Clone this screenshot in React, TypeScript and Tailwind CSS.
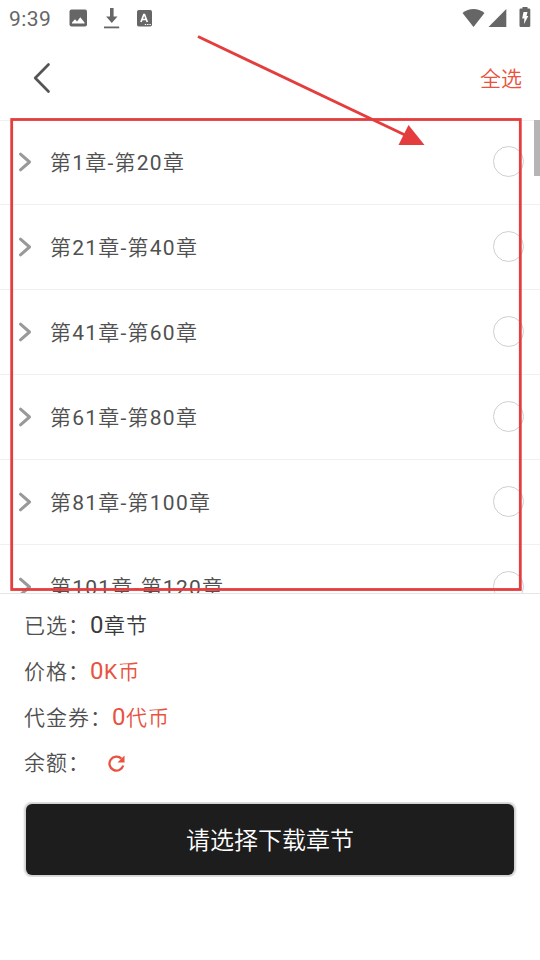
const chapters: [number, number][] = [
  [1, 20],
  [21, 40],
  [41, 60],
  [61, 80],
  [81, 100],
  [101, 120],
];

function StatusBar() {
  return (
    <div className="flex h-9 shrink-0 items-center justify-between px-[9px] text-[#666]">
      <div className="flex items-center">
        <span className="w-[60px] pt-px text-[21px] leading-9 tracking-[0.4px]">
          9:39
        </span>
        <svg width="18" height="18" viewBox="0 0 18 18">
          <rect width="17.5" height="17" x="0.5" y="0.5" rx="2" fill="currentColor" />
          <path d="M3 14.5v-1L6 10.3l2 2.2 3.3-4.2 4.2 5.2v1z" fill="#fff" />
        </svg>
        <svg width="16" height="21" viewBox="0 0 16 21" className="ml-[17px]">
          <path d="M6 0h3.6v8.5h3.9L7.8 15 2.1 8.5H6z" fill="currentColor" />
          <path d="M0 18.5h15.2v1.8H0z" fill="currentColor" />
        </svg>
        <svg width="15" height="17" viewBox="0 0 15 17" className="ml-[17px]">
          <rect width="15" height="16.5" rx="1.8" fill="currentColor" />
          <path d="M4 12 6.8 4.5h.7l2.8 7.5M5.1 9.5h4" stroke="#fff" strokeWidth="1.7" fill="none" />
          <path d="M7.8 14.5h6" stroke="#fff" strokeWidth="1.2" strokeDasharray="1.4 0.9" />
        </svg>
      </div>
      <div className="flex items-center">
        <svg width="23" height="19" viewBox="0 0 23 19">
          <path d="M0.5 4C7 -1.2 16 -1.2 22.5 4L11.5 18z" fill="currentColor" />
        </svg>
        <svg width="19" height="19" viewBox="0 0 19 19" className="ml-[3px]">
          <path d="M18.3 0v18H0.5z" fill="currentColor" />
        </svg>
        <svg width="12" height="21" viewBox="0 0 12 21" className="-mt-0.5 ml-3">
          <path d="M3.5 0h5v1.5H10a1.3 1.3 0 0 1 1.3 1.3v15.9A1.3 1.3 0 0 1 10 20H1.8a1.3 1.3 0 0 1-1.3-1.3V2.8a1.3 1.3 0 0 1 1.3-1.3h1.7z" fill="currentColor" />
          <path d="M4.5 5h4L7.5 9h1.8L5 17l.4-5.5H3.2z" fill="#fff" />
        </svg>
      </div>
    </div>
  );
}

function Header() {
  return (
    <header className="flex h-[85px] shrink-0 items-center justify-between border-b border-[#f0f0f0] pr-[18px] pl-[33px]">
      <svg width="18" height="32" viewBox="0 0 18 32">
        <path d="M15.5 2.5 2.2 16l13.3 13.5" fill="none" stroke="#555" strokeWidth="2.7" strokeLinecap="round" strokeLinejoin="round" />
      </svg>
      <button className="pt-0.5 text-[21px] leading-8 font-[350] text-[#e8523f]">全选</button>
    </header>
  );
}

function ChapterRow({ from, to }: { from: number; to: number }) {
  return (
    <li className="flex h-[85px] items-center border-b border-[#f0f0f0] pr-4 pl-[18px]">
      <svg width="14" height="20" viewBox="0 0 14 20">
        <path d="M2.5 2.2 11.5 10l-9 7.8" fill="none" stroke="#999" strokeWidth="3" strokeLinecap="round" strokeLinejoin="round" />
      </svg>
      <span className="ml-[18px] flex-1 pt-0.5 text-[21px] leading-8 font-[350] tracking-[1.23px] text-[#505050]">
        第<span className="font-normal">{from}</span>章
        <span className="font-normal">-</span>
        第<span className="font-normal">{to}</span>章
      </span>
      <span className="mb-0.5 size-[31px] rounded-full border-[1.5px] border-[#cfcfcf]" />
    </li>
  );
}

function Summary() {
  return (
    <div className="flex flex-col pl-6 text-[21px] font-[350] tracking-[1px] text-[#505050]">
      <div className="flex h-[46px] items-baseline leading-[46px]">
        <span>已选：</span>
        <span className="text-[#3a3a3a]"><b className="text-2xl leading-none font-normal tracking-[0.5px]">0</b>章节</span>
      </div>
      <div className="flex h-[46px] items-baseline leading-[46px]">
        <span>价格：</span>
        <span className="text-[#e8523f]">
          <b className="text-2xl leading-none font-normal tracking-[0.5px]">0</b>
          <span className="font-normal">K</span>币
        </span>
      </div>
      <div className="flex h-[46px] items-baseline leading-[46px]">
        <span>代金券：</span>
        <span className="text-[#e8523f]"><b className="text-2xl leading-none font-normal tracking-[0.5px]">0</b>代币</span>
      </div>
      <div className="flex h-11 items-center leading-[44px]">
        <span>余额：</span>
        <svg width="17" height="17" viewBox="0 0 17 17" className="ml-[18px]">
          <path d="M13.4 3.6A7 7 0 1 0 15.2 10.5" fill="none" stroke="#e8523f" strokeWidth="2.3" />
          <path d="M16.5 0.5v7h-7z" fill="#e8523f" />
        </svg>
      </div>
    </div>
  );
}

export default function App() {
  return (
    <div className="relative flex h-[960px] w-[540px] flex-col overflow-hidden bg-white font-[Roboto,'Noto_Sans_CJK_SC',sans-serif]">
      <StatusBar />
      <Header />

      <div className="-mt-px flex h-[474px] shrink-0 overflow-hidden border-b border-[#e5e5e5]">
        <ul className="flex-1">
          {chapters.map(([from, to]) => (
            <ChapterRow key={from} from={from} to={to} />
          ))}
        </ul>
        {/* scrollbar thumb, floats over the list */}
        <div className="-ml-1.5 h-14 w-1.5 bg-[#b5b5b5]" />
      </div>

      <div className="pt-[9px]">
        <Summary />
      </div>

      <div className="mt-[17px] flex h-[75px] shrink-0 overflow-hidden px-[26px] pt-[2px]">
        <button className="h-[71px] flex-1 rounded-md bg-[#1d1d1d] pt-0.5 text-2xl font-[350] text-white shadow-[0_0_2px_2px_#d0d0d0]">
          请选择下载章节
        </button>
      </div>

      {/* highlight frame and arrow */}
      <svg className="pointer-events-none absolute inset-0" width="540" height="960" viewBox="0 0 540 960">
        <rect x="11.7" y="119.5" width="508.6" height="470" fill="none" stroke="#e43d3d" strokeWidth="2.8" />
        <path d="M198 36.5 405 135" stroke="#e43d3d" strokeWidth="2.9" />
        <path d="M408.5 125 424.5 145h-26z" fill="#e43d3d" />
      </svg>
    </div>
  );
}
